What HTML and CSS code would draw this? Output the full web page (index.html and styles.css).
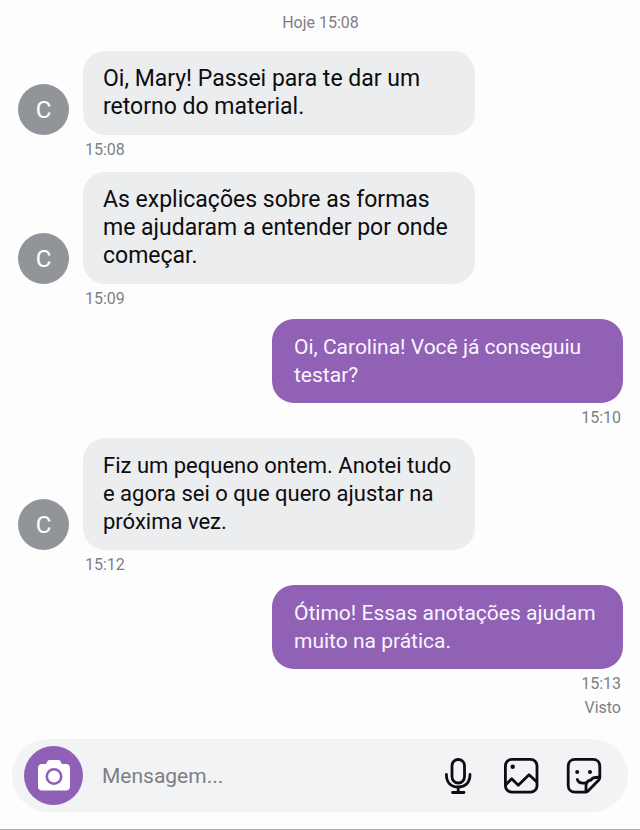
FILE: index.html
```html
<!DOCTYPE html>
<html lang="pt-BR">
<head>
    <meta charset="UTF-8">
    <meta name="viewport" content="width=device-width, initial-scale=1">
    <title>Mensagens</title>
    <link rel="stylesheet" href="styles.css">
</head>
<body>
    <!-- Conversation -->
    <main class="thread">
        <div class="date">Hoje 15:08</div>

        <div class="message received">
            <div class="row">
                <div class="avatar">C</div>
                <p class="bubble">Oi, Mary! Passei para te dar um retorno do material.</p>
            </div>
            <div class="meta">15:08</div>
        </div>

        <div class="message received">
            <div class="row">
                <div class="avatar">C</div>
                <p class="bubble">As explicações sobre as formas me ajudaram a entender por onde começar.</p>
            </div>
            <div class="meta">15:09</div>
        </div>

        <div class="message sent">
            <p class="bubble">Oi, Carolina! Você já conseguiu testar?</p>
            <div class="meta">15:10</div>
        </div>

        <div class="message received">
            <div class="row">
                <div class="avatar">C</div>
                <p class="bubble compact">Fiz um pequeno ontem. Anotei tudo e agora sei o que quero ajustar na próxima vez.</p>
            </div>
            <div class="meta">15:12</div>
        </div>

        <div class="message sent">
            <p class="bubble">Ótimo! Essas anotações ajudam muito na prática.</p>
            <div class="meta">15:13</div>
            <div class="meta">Visto</div>
        </div>
    </main>

    <!-- Message box -->
    <form class="composer">
        <button type="button" class="camera" aria-label="Câmera">
            <svg width="36" height="36" viewBox="0 1 36 36">
                <path fill="#fff" d="M6 7h3c1 0 1.300-.4 1.800-1.300C11.400 4 12 3 13.500 3h9c1.500 0 2.100 1 2.700 2.700.5.900.8 1.300 1.800 1.300h3c2.500 0 4 1.500 4 4V29.500c0 2.500-1.500 4-4 4H6c-2.500 0-4-1.500-4-4V11c0-2.500 1.500-4 4-4z"/>
                <circle cx="18" cy="19.500" r="7.200" fill="#fff" stroke="#8f60b5" stroke-width="2.600"/>
            </svg>
        </button>
        <input type="text" class="text" placeholder="Mensagem..." aria-label="Mensagem">
        <div class="actions">
            <button type="button" class="icon" aria-label="Gravar áudio">
                <svg width="40" height="40" viewBox="0 0 40 40">
                    <rect x="14" y="3.500" width="12.500" height="23.500" rx="6.250"/>
                    <path d="M8.400 18.500C8.400 27 13.500 31 20.200 31S32 27 32 18.500M20.200 31v5.500M14.500 36.500h11.500"/>
                </svg>
            </button>
            <button type="button" class="icon" aria-label="Enviar imagem">
                <svg width="40" height="40" viewBox="0 0 40 40">
                    <rect x="4.400" y="3.400" width="31.600" height="32.800" rx="6.500"/>
                    <path d="M5 28.500l5.700-5.800 6.600 6.600L28 18.700l7.600 7"/>
                    <circle class="dot" cx="11.700" cy="10.800" r="2.200"/>
                </svg>
            </button>
            <button type="button" class="icon" aria-label="Figurinhas">
                <svg width="40" height="40" viewBox="0 0 40 40">
                    <path d="M21.500 36.200H11.200c-4.300 0-7-2.700-7-7V10.400c0-4.300 2.700-7 7-7h17.600c4.300 0 7 2.700 7 7V21.500c0 1.200-.3 1.700-1 2.400L23.500 35.400c-.7.600-1.200.8-2 .8z"/>
                    <path d="M35.800 21.300c-4.800-.2-7.600.4-8.800 2.700-3.400.6-5 2.800-5 6v5.500M13.300 23.500c1 2.600 4 4.200 8.200 3.300"/>
                    <circle class="dot" cx="13.200" cy="16" r="2"/>
                    <circle class="dot" cx="26" cy="16" r="2"/>
                </svg>
            </button>
        </div>
    </form>
</body>
</html>
```
FILE: styles.css
```css
* {
    box-sizing: border-box;
}

body {
    display: flex;
    flex-direction: column;
    min-height: 100vh;
    margin: 0;
    background-color: #fdfdfe;
    border-bottom: 1px solid #b0b0b2;
    color: #0c0c0e;
    font-family: Roboto, "Liberation Sans", sans-serif;
    font-size: 23px;
    line-height: 28px;
}

/* Conversation */
.thread {
    display: flex;
    flex: 1;
    flex-direction: column;
    gap: 8px;
    padding: 11px 17px 18px 18px;
}

.date,
.meta {
    color: #7d7f84;
    font-size: 16px;
    line-height: 24px;
}

.date {
    margin-bottom: 8px;
    text-align: center;
}

.message {
    display: flex;
    flex-direction: column;
}

/* Two messages in a row from the same person */
.received + .received {
    margin-top: 2px;
}

.row {
    display: flex;
    align-items: flex-end;
    gap: 14px;
    margin-bottom: 3px;
}

.avatar {
    flex: none;
    width: 51px;
    height: 51px;
    border-radius: 50%;
    background-color: #919499;
    color: #fff;
    font-size: 24px;
    line-height: 52px;
    text-align: center;
}

.bubble {
    max-width: 392px;
    margin: 0;
    padding: 14px 20px;
    border-radius: 22px;
    background-color: #ecedee;
}

.compact {
    font-size: 22px;
}

.received .meta {
    margin-left: 67px;
}

.sent {
    align-items: flex-end;
}

.sent .bubble {
    max-width: 351px;
    margin-bottom: 3px;
    padding: 14px 22px;
    background-color: #9061b5;
    color: #fbf5ff;
    font-size: 21px;
}

.sent .meta {
    margin-right: 2px;
}

/* Message box */
.composer {
    display: flex;
    align-items: center;
    gap: 19px;
    margin: 0 12px 17px;
    padding: 7px 24px 7px 12px;
    border-radius: 37px;
    background-color: #f2f3f4;
}

.composer button {
    display: flex;
    flex: none;
    align-items: center;
    justify-content: center;
    padding: 0;
    border: none;
    background: none;
    cursor: pointer;
}

.composer .camera {
    width: 59px;
    height: 59px;
    border-radius: 50%;
    background-color: #8f60b5;
}

.text {
    flex: 1;
    min-width: 0;
    padding: 0;
    border: none;
    outline: none;
    background: none;
    font: inherit;
    font-size: 21px;
}

.text::placeholder {
    color: #7d7f84;
    opacity: 1;
}

.actions {
    display: flex;
    gap: 23px;
}

.icon svg {
    fill: none;
    stroke: #0c0c12;
    stroke-width: 2.8;
    stroke-linecap: round;
    stroke-linejoin: round;
}

.icon .dot {
    fill: #0c0c12;
    stroke: none;
}
```
